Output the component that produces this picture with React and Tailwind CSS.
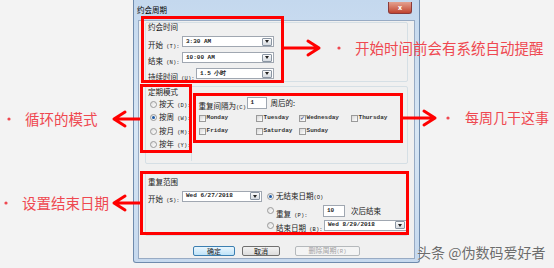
import React from "react";

const cjk = "font-['Noto_Sans_CJK_SC','Noto_Sans',sans-serif]";
const mono = "font-['Liberation_Mono',monospace]";

function DropBtn() {
  return (
    <span className="ml-auto mr-[1px] flex h-[8px] w-[10px] items-center justify-center rounded-[1px] border border-[#8b96a3] bg-gradient-to-b from-[#fbfbfb] to-[#d6dbe1]">
      <span className="h-0 w-0 border-x-[2.5px] border-t-[3px] border-x-transparent border-t-[#222]" />
    </span>
  );
}

function Combo({ className, value }) {
  return (
    <div className={"flex h-[11px] items-center border border-[#a0a7b1] bg-white " + className}>
      <span className={mono + " pl-[3px] text-[6px] font-bold leading-none text-[#222]"}>{value}</span>
      <DropBtn />
    </div>
  );
}

function Field({ className, value }) {
  return (
    <div className={"flex h-[12px] items-center border border-[#a0a7b1] bg-white pl-[3px] " + className}>
      <span className={mono + " text-[6px] font-bold leading-none text-[#222]"}>{value}</span>
    </div>
  );
}

function Radio({ checked }) {
  return (
    <span className="flex h-[7px] w-[7px] shrink-0 items-center justify-center rounded-full border border-[#9a9a9a] bg-gradient-to-br from-[#dedede] to-white">
      {checked && <span className="h-[3px] w-[3px] rounded-full bg-[#1d5aa6]" />}
    </span>
  );
}

function Check({ checked }) {
  return (
    <span className="flex h-[7px] w-[7px] shrink-0 items-center justify-center border border-[#9a9a9a] bg-gradient-to-br from-[#d8d8d8] to-white text-[6px] leading-none text-[#1b3c8a]">
      {checked ? "✓" : null}
    </span>
  );
}

function Lbl({ text, key_, className = "" }) {
  return (
    <span className={cjk + " whitespace-nowrap text-[7.5px] leading-none text-[#1a1a1a] " + className}>
      {text}
      {key_ && <span className={mono + " text-[5.5px]"}> ({key_}):</span>}
    </span>
  );
}

function Day({ name, checked }) {
  return (
    <div className="flex items-center gap-[1px]">
      <Check checked={checked} />
      <span className={mono + " text-[6px] font-bold leading-none text-[#333]"}>{name}</span>
    </div>
  );
}

function Btn({ children, kind }) {
  const cls =
    kind === "default"
      ? "border-[#3c7fb1] from-[#eaf6fd] to-[#bfe3f8] text-[#1a1a1a]"
      : kind === "disabled"
      ? "border-[#b5b9bc] from-[#f4f4f4] to-[#f4f4f4] text-[#a3a3a3]"
      : "border-[#707070] from-[#f3f3f3] to-[#dcdcdc] text-[#1a1a1a]";
  return (
    <div className={"flex h-[10px] items-center justify-center rounded-[2px] border bg-gradient-to-b " + cls}>
      <span className={cjk + " text-[7px] leading-none"}>{children}</span>
    </div>
  );
}

function Dialog() {
  return (
    <div className="absolute left-[133px] top-0 flex h-[263px] w-[287px] flex-col rounded-b-[3px] border border-t-0 border-[#6f8bad] bg-gradient-to-b from-[#c4d8ee] via-[#d8e6f4] to-[#c6d9ee]">
      <div className="flex h-[20px] items-center pl-[3px]">
        <span className={cjk + " text-[7.5px] leading-none text-black"}>约会周期</span>
        <span className="mb-[5px] ml-auto mr-[7px] flex h-[12px] w-[24px] items-center justify-center rounded-b-[3px] border border-t-0 border-[#8a3a3a] bg-gradient-to-b from-[#e3a190] to-[#c0432f] text-[7px] font-bold leading-none text-white">
          x
        </span>
      </div>

      <div className="mx-[4px] flex h-[239px] flex-col border border-[#98abc4] bg-[#f0f0f0]">
        {/* 约会时间 */}
        <div className="ml-[6px] mt-[1px] flex h-[60px] w-[263px] flex-col gap-[5px] rounded-[2px] border border-[#d5dfe5] pl-[2px]">
          <div className="flex h-[8px] items-center">
            <Lbl text="约会时间" />
          </div>
          <div className="flex h-[11px] items-center">
            <div className="w-[34px]"><Lbl text="开始" key_="T" /></div>
            <Combo className="w-[92px]" value="3:30 AM" />
          </div>
          <div className="flex h-[11px] items-center">
            <div className="w-[34px]"><Lbl text="结束" key_="N" /></div>
            <Combo className="w-[92px]" value="10:00 AM" />
          </div>
          <div className="flex h-[11px] items-center">
            <div className="w-[48px]"><Lbl text="持续时间" key_="U" /></div>
            <Combo className="w-[78px]" value="1.5 小时" />
          </div>
        </div>

        {/* 定期模式 */}
        <div className="ml-[6px] mt-[4px] flex h-[78px] w-[263px] rounded-[2px] border border-[#d5dfe5]">
          <div className="flex w-[46px] flex-col pl-[2px]">
            <div className="flex h-[10px] items-center">
              <Lbl text="定期模式" />
            </div>
            <div className="mt-[2px] flex flex-col gap-[3.5px] pl-[2px]">
              {[
                ["按天", "D", false],
                ["按周", "W", true],
                ["按月", "M", false],
                ["按年", "Y", false],
              ].map(([t, k, c]) => (
                <div key={k} className="flex h-[10px] items-center gap-[2px]">
                  <Radio checked={c} />
                  <Lbl text={t} key_={k} />
                </div>
              ))}
            </div>
          </div>
          <div className="mb-[2px] mt-[6px] flex flex-1 flex-col border-l border-[#d5dfe5] pl-[7px]">
            <div className="mt-[4px] flex h-[12px] items-center">
              <div className="w-[48px]">
                <span className={cjk + " whitespace-nowrap text-[7.5px] leading-none text-[#1a1a1a]"}>
                  重复间隔为<span className={mono + " text-[5.5px]"}>(C)</span>
                </span>
              </div>
              <Field className="w-[20px]" value="1" />
              <Lbl text="周后的:" className="ml-[4px]" />
            </div>
            <div className="mt-[4.5px] grid h-[9px] grid-cols-[57px_43px_52px_60px] items-center">
              <Day name="Monday" />
              <Day name="Tuesday" />
              <Day name="Wednesday" checked />
              <Day name="Thursday" />
            </div>
            <div className="mt-[4px] grid h-[9px] grid-cols-[57px_43px_52px_60px] items-center">
              <Day name="Friday" />
              <Day name="Saturday" />
              <Day name="Sunday" />
            </div>
          </div>
        </div>

        {/* 重复范围 */}
        <div className="ml-[6px] mt-[8px] flex h-[64px] w-[263px] flex-col rounded-[2px] border border-[#d5dfe5] pl-[2px]">
          <div className="mt-[4px] flex h-[10px] items-center">
            <Lbl text="重复范围" />
          </div>
          <div className="mt-[3.5px] flex">
            <div className="flex h-[11px] items-center">
              <div className="w-[34px]"><Lbl text="开始" key_="S" /></div>
              <Combo className="w-[80px]" value="Wed 6/27/2018" />
            </div>
            <div className="ml-[5px] flex flex-col gap-[3px]">
              <div className="flex h-[11px] items-center gap-[2px]">
                <Radio checked />
                <span className={cjk + " whitespace-nowrap text-[7.5px] leading-none text-[#1a1a1a]"}>
                  无结束日期<span className={mono + " text-[5.5px]"}>(O)</span>
                </span>
              </div>
              <div className="flex h-[12px] items-center gap-[2px]">
                <Radio />
                <div className="w-[45px]"><Lbl text="重复" key_="P" /></div>
                <Field className="w-[22px]" value="10" />
                <Lbl text="次后结束" className="ml-[4px]" />
              </div>
              <div className="flex h-[11px] items-center gap-[2px]">
                <Radio />
                <div className="w-[46px]"><Lbl text="结束日期" key_="B" /></div>
                <Combo className="w-[83px]" value="Wed 8/29/2018" />
              </div>
            </div>
          </div>
        </div>

        {/* buttons */}
        <div className="mt-[10px] flex pl-[54px]">
          <div className="w-[42px]"><Btn kind="default">确定</Btn></div>
          <div className="ml-[7px] w-[38px]"><Btn>取消</Btn></div>
          <div className="ml-[15px] w-[65px]">
            <Btn kind="disabled">
              删除周期<span className={mono + " text-[5.5px]"}>(R)</span>
            </Btn>
          </div>
        </div>
      </div>
    </div>
  );
}

function Note({ className, children }) {
  return (
    <div className={cjk + " absolute whitespace-nowrap leading-[15px] text-[#ef4850] " + className}>
      {children}
    </div>
  );
}

export default function App() {
  return (
    <div className="relative h-[268px] w-[554px] overflow-hidden bg-[#f3f3f3]">
      <Dialog />

      {/* annotation frames */}
      <div className="absolute left-[141px] top-[16px] h-[67px] w-[143px] border-[3px] border-[#ff0000]" />
      <div className="absolute left-[140px] top-[84px] h-[69px] w-[52px] border-[3px] border-[#ff0000]" />
      <div className="absolute left-[193px] top-[93px] h-[50px] w-[210px] border-[3px] border-[#ff0000]" />
      <div className="absolute left-[140px] top-[171px] h-[64px] w-[269px] border-[3px] border-[#ff0000]" />

      <svg className="pointer-events-none absolute inset-0" width="554" height="268" viewBox="0 0 554 268">
        <g stroke="#ff0000" strokeWidth="3" fill="none" strokeLinecap="round" strokeLinejoin="round">
          <path d="M284 48H319M308 41L319 48L308 55" />
          <path d="M140 119H114M125 112L114 119L125 126" />
          <path d="M403 118H435M424 111L435 118L424 125" />
          <path d="M140 203H114M125 196L114 203L125 210" />
        </g>
        <g fill="#ef4850">
          <circle cx="339" cy="48" r="1.6" />
          <circle cx="9" cy="119" r="1.6" />
          <circle cx="448" cy="118" r="1.6" />
          <circle cx="6" cy="203" r="1.6" />
        </g>
      </svg>

      <Note className="left-[355px] top-[40px] text-[14.5px]">开始时间前会有系统自动提醒</Note>
      <Note className="left-[25px] top-[111px] text-[14.5px]">循环的模式</Note>
      <Note className="left-[465px] top-[110px] text-[14px]">每周几干这事</Note>
      <Note className="left-[22px] top-[195px] text-[14.5px]">设置结束日期</Note>

      <div className={cjk + " absolute left-[417px] top-[244px] whitespace-nowrap text-[14px] leading-[16px] text-[#6c6c6c] [text-shadow:0_0_1px_#fff]"}>
        头条 @伪数码爱好者
      </div>
    </div>
  );
}
